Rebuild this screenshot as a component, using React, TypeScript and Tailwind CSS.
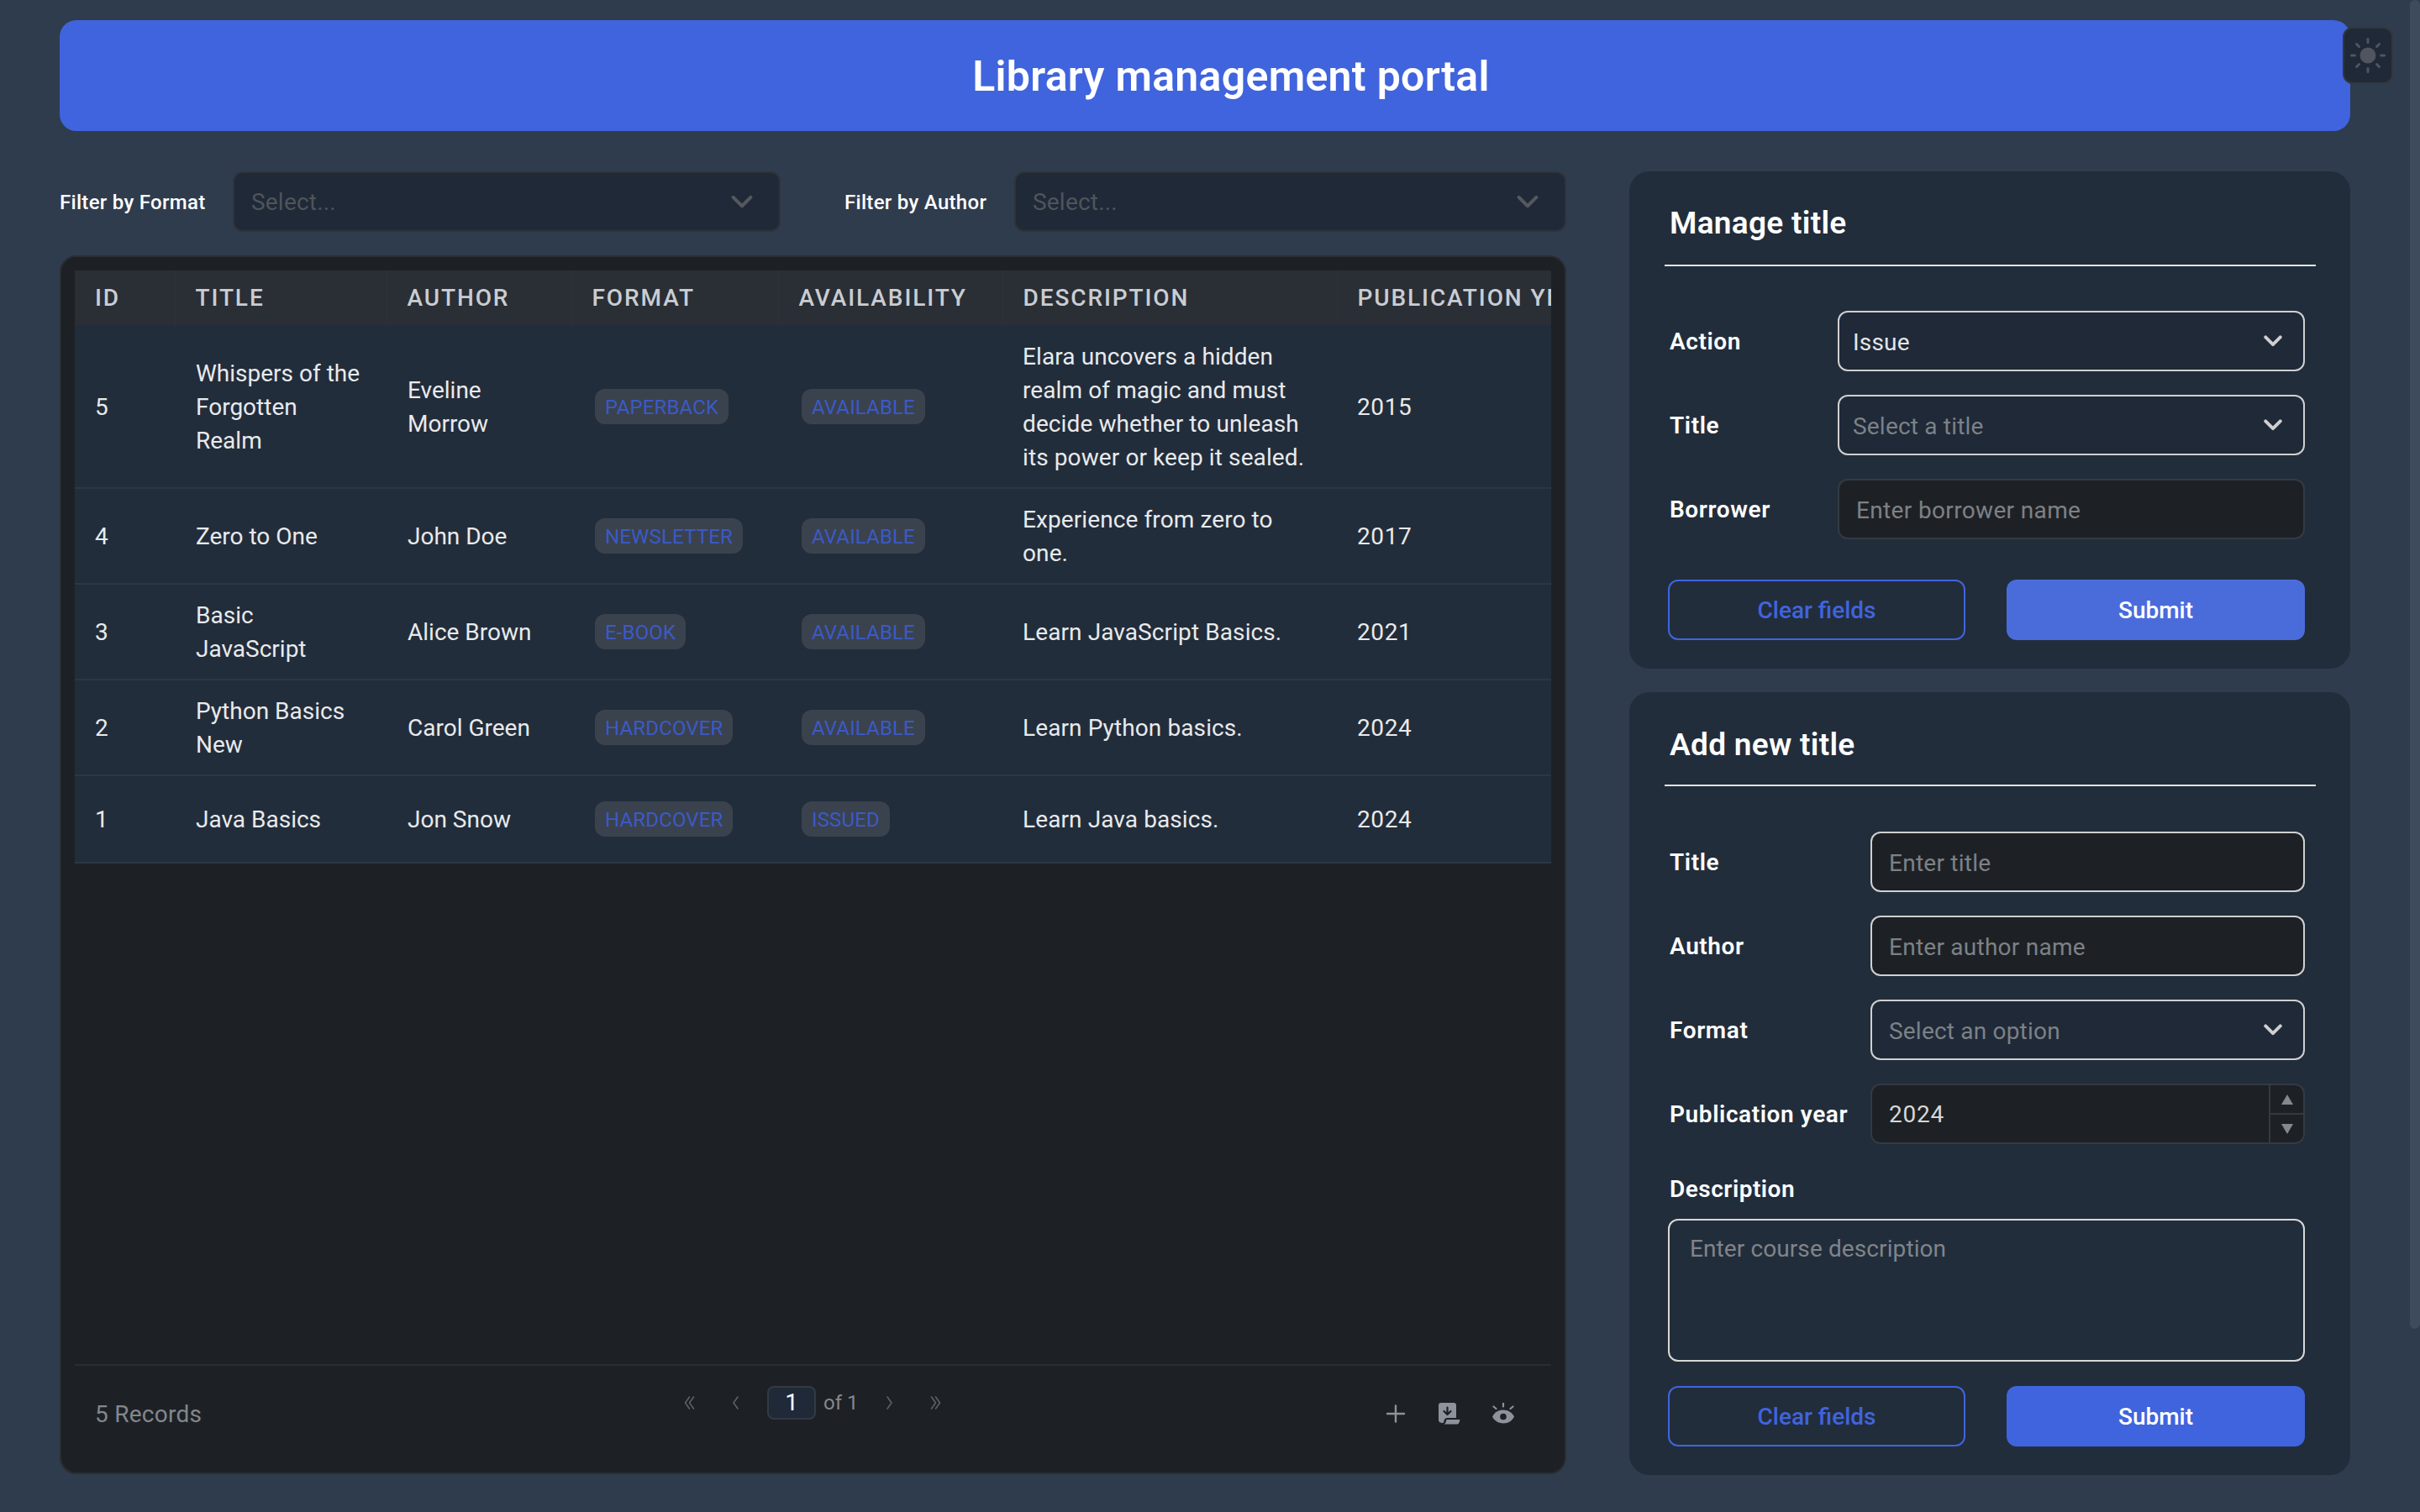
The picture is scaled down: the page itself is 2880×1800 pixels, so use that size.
import React from "react";

const Chevron = ({ color = "#cfcfcf", w = 22, sw = 4 }: { color?: string; w?: number; sw?: number }) => (
  <svg width={w} height={w * 0.62} viewBox="0 0 22 14" fill="none" stroke={color} strokeWidth={sw} strokeLinecap="round" strokeLinejoin="round">
    <path d="M2 2.5 L11 11.5 L20 2.5" />
  </svg>
);

const Badge = ({ t }: { t: string }) => (
  <span className="inline-flex items-center h-[42px] px-[12px] pt-[2px] ml-[4px] rounded-[12px] bg-[#3a424e] text-[#3b5ac6] text-[24px] leading-none uppercase tracking-[0.15px]">{t}</span>
);

const rows = [
  { id: "5", title: "Whispers of the\nForgotten\nRealm", author: "Eveline\nMorrow", format: "Paperback", avail: "Available", desc: "Elara uncovers a hidden\nrealm of magic and must\ndecide whether to unleash\nits power or keep it sealed.", year: "2015", h: "h-[194px]" },
  { id: "4", title: "Zero to One", author: "John Doe", format: "Newsletter", avail: "Available", desc: "Experience from zero to\none.", year: "2017", h: "h-[114px]" },
  { id: "3", title: "Basic\nJavaScript", author: "Alice Brown", format: "E-book", avail: "Available", desc: "Learn JavaScript Basics.", year: "2021", h: "h-[114px]" },
  { id: "2", title: "Python Basics\nNew", author: "Carol Green", format: "Hardcover", avail: "Available", desc: "Learn Python basics.", year: "2024", h: "h-[114px]" },
  { id: "1", title: "Java Basics", author: "Jon Snow", format: "Hardcover", avail: "Issued", desc: "Learn Java basics.", year: "2024", h: "h-[104px]" },
];

const heads = [
  { t: "ID", w: "w-[119px]" },
  { t: "TITLE", w: "w-[252px]" },
  { t: "AUTHOR", w: "w-[220px]" },
  { t: "FORMAT", w: "w-[246px]" },
  { t: "AVAILABILITY", w: "w-[267px]" },
  { t: "DESCRIPTION", w: "w-[398px]" },
  { t: "PUBLICATION YEAR", w: "w-[360px]" },
];

const FilterSelect = ({ className }: { className: string }) => (
  <div className={`h-[72px] rounded-[12px] bg-[#1f2938] border-[2px] border-[#2f3338] flex items-center justify-between pl-[20px] pr-[31px] ${className}`}>
    <span className="text-[28px] text-[#50545a] pt-[2px] tracking-[0.2px]">Select...</span>
    <Chevron color="#55585d" w={26} sw={3.5} />
  </div>
);

const FormRow = ({ label, labelW, children }: { label: string; labelW: string; children: React.ReactNode }) => (
  <div className="flex items-center h-[72px]">
    <div className={`${labelW} shrink-0 text-[28px] font-semibold tracking-[0.6px] text-white pt-[2px]`}>{label}</div>
    <div className="flex-1">{children}</div>
  </div>
);

const SelectBox = ({ text, muted, pl = "pl-[16px]" }: { text: string; muted?: boolean; pl?: string }) => (
  <div className={`h-[72px] rounded-[12px] bg-[#1f2938] border-[2px] border-[#d0d0d0] flex items-center justify-between ${pl} pr-[25px]`}>
    <span className={`text-[28px] pt-[4px] tracking-[0.2px] ${muted ? "text-[#7d8186]" : "text-[#e4e5e7]"}`}>{text}</span>
    <Chevron />
  </div>
);

const TextBox = ({ text }: { text: string }) => (
  <div className="h-[72px] rounded-[12px] border-[2px] flex items-center pl-[20px] bg-[#1d2125] border-[#d0d0d0]">
    <span className="text-[28px] text-[#7d8186] pt-[4px] tracking-[0.25px]">{text}</span>
  </div>
);

const BorrowerBox = ({ text }: { text: string }) => (
  <div className="h-[72px] rounded-[12px] border-[2px] flex items-center pl-[20px] bg-[#1d2125] border-[#333a42]">
    <span className="text-[28px] text-[#7d8186] pt-[4px] tracking-[0.35px]">{text}</span>
  </div>
);

const Buttons = ({ submit }: { submit: string }) => (
  <div className="flex gap-[49px] ml-[-2px]">
    <div className="w-[354px] h-[72px] rounded-[12px] border-[2px] border-[#4064de] flex items-center justify-center text-[28px] font-medium text-[#4064de] pt-[2px]">Clear fields</div>
    <div className={`w-[355px] h-[72px] rounded-[12px] flex items-center justify-center text-[28px] font-medium text-white pt-[2px] ${submit}`}>Submit</div>
  </div>
);

const PageArrow = ({ d }: { d: string }) => (
  <div className="w-[55px] h-[40px] flex items-center justify-center">
    <svg width="16" height="18" viewBox="0 0 16 18" fill="none" stroke="#5c6067" strokeWidth="1.6" strokeLinecap="round" strokeLinejoin="round">
      <path d={d} />
    </svg>
  </div>
);

export default function App() {
  return (
    <div className="relative w-[2880px] h-[1800px] overflow-hidden bg-[#2f3c4d] pt-[24px] pl-[71px] font-['Roboto',sans-serif] text-white">
      {/* scrollbar */}
      <div className="absolute right-0 top-0 w-[12px] h-[1582px] rounded-[6px] bg-[#3e4b5c]" />

      {/* theme toggle */}
      <div className="absolute left-[2788px] top-[32px] w-[60px] h-[68px] rounded-[12px] bg-[#1f2938] border-[2px] border-[#33373c] flex items-center justify-center">
        <svg width="44" height="44" viewBox="0 0 44 44" fill="#50555f" stroke="#50555f" strokeWidth="3" strokeLinecap="round">
          <circle cx="22" cy="22" r="9.5" stroke="none" />
          <path d="M22 2.5v4M22 37.5v4M2.5 22h4M37.5 22h4M8.5 8.5l3 3M32.5 32.5l3 3M8.5 35.5l3-3M32.5 11.5l3-3" />
        </svg>
      </div>

      {/* header */}
      <div className="w-[2726px] h-[132px] rounded-[20px] bg-[#4064de] flex items-center justify-center pl-[62px]">
        <h1 className="text-[50px] font-semibold tracking-[0.3px] mt-[2px]">Library management portal</h1>
      </div>

      <div className="flex gap-[75px] mt-[48px]">
        {/* left */}
        <div className="w-[1793px] flex flex-col">
          <div className="flex items-center h-[72px]">
            <span className="w-[206px] shrink-0 text-[24px] font-medium tracking-[0.3px] pt-[2px]">Filter by Format</span>
            <FilterSelect className="w-[652px]" />
            <span className="w-[202px] shrink-0 ml-[76px] text-[24px] font-medium tracking-[0.3px] pt-[2px]">Filter by Author</span>
            <FilterSelect className="w-[657px]" />
          </div>

          <div className="mt-[28px] h-[1451px] rounded-[20px] border-[2px] border-[#2a2e33] bg-[#1d2125] pt-[16px] pl-[16px] flex flex-col">
            <div className="w-[1757px] overflow-hidden flex-1">
              <table className="table-fixed border-collapse w-[1862px]">
                <thead>
                  <tr className="h-[65px] bg-[#2a2e35]">
                    {heads.map((h) => (
                      <th key={h.t} className={`${h.w} pl-[24px] text-left text-[28px] font-medium tracking-[1.9px] text-[#c9cdd2] border-r-[1px] border-[#2e3238] whitespace-nowrap overflow-hidden`}>{h.t}</th>
                    ))}
                  </tr>
                </thead>
                <tbody>
                  {rows.map((r) => (
                    <tr key={r.id} className={`${r.h} bg-[#222d3b] border-b-[2px] border-[#2b3747] text-[28px] leading-[40px] text-[#e8eaec]`}>
                      <td className="pl-[24px] pt-[2px]">{r.id}</td>
                      <td className="pl-[25px] pt-[2px] whitespace-pre-line">{r.title}</td>
                      <td className="pl-[25px] pt-[2px] whitespace-pre-line">{r.author}</td>
                      <td className="pl-[24px]"><Badge t={r.format} /></td>
                      <td className="pl-[24px]"><Badge t={r.avail} /></td>
                      <td className="pl-[24px] pt-[2px] whitespace-pre-line tracking-[0.1px]">{r.desc}</td>
                      <td className="pl-[24px] pt-[2px] tracking-[0.6px]">{r.year}</td>
                    </tr>
                  ))}
                </tbody>
              </table>
            </div>

            <div className="h-[129px] w-[1757px] border-t-[2px] border-[#2a2e33] flex items-start">
              <div className="w-[704px] pl-[24px] pt-[38px] text-[28px] leading-[40px] tracking-[0.25px] text-[#83878d]">5 Records</div>
              <div className="flex items-center pt-[24px]">
                <PageArrow d="M7.5 2L2.5 9l5 7M12.5 2l-5 7 5 7" />
                <PageArrow d="M10 2L5 9l5 7" />
                <div className="ml-[10px] w-[58px] h-[40px] rounded-[8px] bg-[#1f2938] border-[2px] border-[#333a42] flex items-center justify-center text-[28px] text-white">1</div>
                <span className="ml-[9px] w-[50px] text-[24px] text-[#83878d]">of 1</span>
                <PageArrow d="M6 2l5 7-5 7" />
                <PageArrow d="M3.5 2l5 7-5 7M8.5 2l5 7-5 7" />
              </div>
              <div className="ml-auto mr-[44px] mt-[44px] flex gap-[38px] items-center text-[#8e939b]">
                <svg width="26" height="26" viewBox="0 0 26 26" fill="none" stroke="#8e939b" strokeWidth="2.4" strokeLinecap="round">
                  <path d="M13 3.5v19M3 13h20" />
                </svg>
                <svg width="26" height="26" viewBox="0 0 26 26">
                  <path d="M3 0h15a3 3 0 0 1 3 3v15H10.5c-2.4 0-3.6 1.6-4.2 4.2L5.6 24C2.5 24 0 23 0 20.5V3a3 3 0 0 1 3-3z" fill="#8e939b" />
                  <path d="M9.5 20h16l-1 3.5a2.5 2.5 0 0 1-2.4 2H6.500c1.800-.6 2.500-3.500 3-5.500z" fill="#8e939b" />
                  <path d="M10.500 5.500v8M6.500 10l4 4 4-4" fill="none" stroke="#1d2125" strokeWidth="2.200" strokeLinecap="round" strokeLinejoin="round" />
                </svg>
                <svg width="26" height="26" viewBox="0 0 26 26">
                  <path d="M0 16.500C2.500 11.500 7 8.500 13 8.500s10.500 3 13 8c-2.500 5-7 8-13 8s-10.500-3-13-8z" fill="#8e939b" />
                  <circle cx="13" cy="16.500" r="3.800" fill="#1d2125" />
                  <path d="M13 0.500v4M1.500 4.500l3 2.500M24.500 4.500l-3 2.500" stroke="#8e939b" strokeWidth="2.200" strokeLinecap="round" fill="none" />
                </svg>
              </div>
            </div>
          </div>
        </div>

        {/* right */}
        <div className="w-[858px] flex flex-col gap-[28px]">
          <div className="h-[592px] rounded-[24px] bg-[#222d3b] pl-[48px] pr-[54px] pt-[40px]">
            <h2 className="text-[37px] leading-[44px] font-semibold tracking-[0.3px]">Manage title</h2>
            <div className="mt-[27px] ml-[-6px] w-[775px] h-[2px] bg-[#e2e2e2]" />
            <div className="mt-[53px] flex flex-col gap-[28px]">
              <FormRow label="Action" labelW="w-[200px]"><SelectBox text="Issue" /></FormRow>
              <FormRow label="Title" labelW="w-[200px]"><SelectBox text="Select a title" muted /></FormRow>
              <FormRow label="Borrower" labelW="w-[200px]"><BorrowerBox text="Enter borrower name" /></FormRow>
            </div>
            <div className="mt-[48px]"><Buttons submit="bg-[#4a6cdb]" /></div>
          </div>

          <div className="h-[932px] rounded-[24px] bg-[#222d3b] pl-[48px] pr-[54px] pt-[41px]">
            <h2 className="text-[37px] leading-[44px] font-semibold tracking-[0.3px]">Add new title</h2>
            <div className="mt-[25px] ml-[-6px] w-[775px] h-[2px] bg-[#e2e2e2]" />
            <div className="mt-[54px] flex flex-col gap-[28px]">
              <FormRow label="Title" labelW="w-[239px]"><TextBox text="Enter title" /></FormRow>
              <FormRow label="Author" labelW="w-[239px]"><TextBox text="Enter author name" /></FormRow>
              <FormRow label="Format" labelW="w-[239px]"><SelectBox text="Select an option" muted pl="pl-[20px]" /></FormRow>
              <FormRow label="Publication year" labelW="w-[239px]">
                <div className="h-[72px] rounded-[12px] bg-[#1d2125] border-[2px] border-[#333a42] flex items-center overflow-hidden">
                  <span className="flex-1 pl-[20px] pt-[2px] text-[28px] tracking-[0.8px] text-[#d6d8da]">2024</span>
                  <div className="w-[41px] h-full border-l-[2px] border-[#333a42] flex flex-col">
                    <div className="flex-1 flex items-center justify-center border-b-[2px] border-[#333a42]">
                      <svg width="14" height="12" viewBox="0 0 14 12"><path d="M7 0l7 12H0z" fill="#85898f" /></svg>
                    </div>
                    <div className="flex-1 flex items-center justify-center">
                      <svg width="14" height="12" viewBox="0 0 14 12"><path d="M7 12L0 0h14z" fill="#85898f" /></svg>
                    </div>
                  </div>
                </div>
              </FormRow>
            </div>
            <div className="mt-[34px] h-[40px] flex items-center text-[28px] font-semibold tracking-[0.5px]">Description</div>
            <div className="mt-[15px] ml-[-2px] w-[758px] h-[170px] rounded-[12px] border-[2px] border-[#d8d8d8] pl-[24px] pt-[14px] text-[28px] leading-[40px] tracking-[0.1px] text-[#80848a]">Enter course description</div>
            <div className="mt-[29px]"><Buttons submit="bg-[#4064de]" /></div>
          </div>
        </div>
      </div>
    </div>
  );
}
